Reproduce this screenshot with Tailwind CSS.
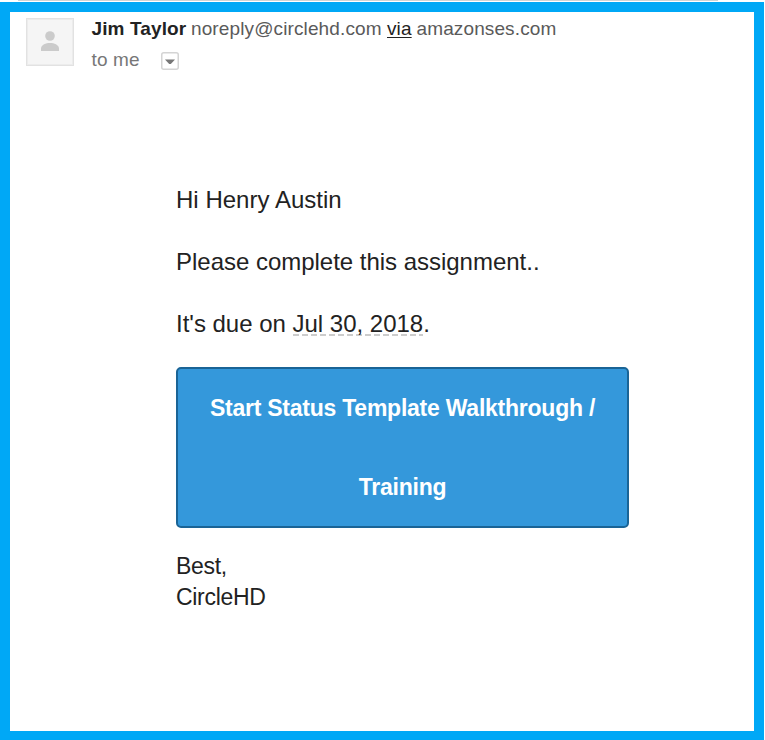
<!DOCTYPE html>
<html lang="en">
<head>
<meta charset="utf-8">
<title>Assignment email</title>
<script src="https://cdn.jsdelivr.net/npm/@tailwindcss/browser@4"></script>
</head>
<body class="bg-white w-[765px] h-[740px] overflow-hidden font-['Liberation_Sans',Arial,sans-serif] text-[#222222]">
<div class="ml-[18px] w-[700px] h-px bg-[#d0d3d4]"></div>
<main class="mt-px w-[764px] h-[738px] border-10 border-b-9 border-[#00a8f6] bg-white">
  <header class="flex pl-4 pt-1.5 h-[172px]">
    <div class="w-12 h-12 border-[1.5px] border-[#e2e2e2] bg-[#f5f5f5] shadow-[inset_0_0_0_1px_#ececec]">
      <svg class="block" width="46" height="46" viewBox="27 19 46 46" fill="#cbcbcb"><circle cx="50" cy="36" r="4.8"/><path d="M41 51V48.5C41 44.8 46 43 50 43S59 44.8 59 48.5V51Z"/></svg>
    </div>
    <div class="ml-[17.5px] text-[19px] leading-[22px] whitespace-nowrap text-[#5a5a5a] tracking-[0.12px]">
      <div class="flex">
        <b class="w-[99.5px] text-[#222222]">Jim Taylor</b>
        <span class="w-[196px]">noreply@circlehd.com</span>
        <span class="w-[29.5px]"><a class="underline decoration-1 underline-offset-2 text-[#222222]">via</a></span>
        <span>amazonses.com</span>
      </div>
      <div class="flex mt-[9px] text-[#777777]">
        <span class="w-[69.5px]">to me</span>
        <svg class="mt-[3px]" width="18" height="18" viewBox="0 0 18 18"><rect x=".75" y=".75" width="16.5" height="16.5" rx="2" fill="#fff" stroke="#d4d4d4" stroke-width="1.5"/><path d="M4 7.5H14L9.8 12H8.2Z" fill="#777"/></svg>
      </div>
    </div>
  </header>
  <section class="ml-[166px] w-[455px] text-2xl leading-[31px] whitespace-nowrap">
    <p class="tracking-[0.02px]">Hi Henry Austin</p>
    <p class="mt-[31px] tracking-[-0.02px]">Please complete this assignment..</p>
    <p class="mt-[31px] tracking-[-0.01px]">It's due on <span class="inline-block h-[28px] bg-[repeating-linear-gradient(90deg,#cccccc_0,#cccccc_6px,transparent_6px,transparent_9px)] bg-[length:100%_2px] bg-bottom bg-no-repeat">Jul 30, 2018</span>.</p>
    <a class="block mt-[28px] w-[453px] h-[161px] rounded-[5px] border-2 border-[#1a6496] bg-[#3498db] text-center text-[23px] leading-[79px] font-bold text-white tracking-[-0.24px]">Start Status Template Walkthrough /<br>Training</a>
    <p class="mt-[23px] text-[23px] tracking-[-0.3px]">Best,<br>CircleHD</p>
  </section>
</main>
</body>
</html>
